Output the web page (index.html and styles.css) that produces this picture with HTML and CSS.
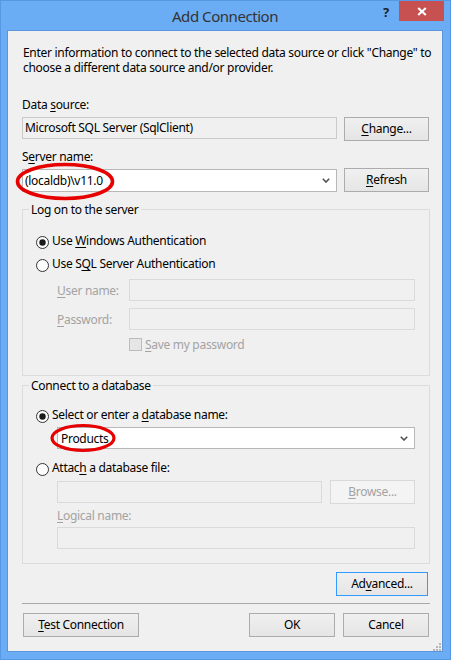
FILE: index.html
```html
<!DOCTYPE html>
<html lang="en">
<head>
<meta charset="utf-8">
<title>Add Connection</title>
<link rel="stylesheet" href="styles.css">
</head>
<body>
<div class="window">
  <header class="titlebar">
    <span class="spacer"></span>
    <h1 class="title">Add Connection</h1>
    <div class="caption-buttons">
      <span class="help">?</span>
      <span class="close"><svg width="10" height="9" viewBox="0 0 10 9"><path d="M1.2 1 L8.8 8 M8.8 1 L1.2 8" stroke="#fff" stroke-width="2.1" fill="none"/></svg></span>
    </div>
  </header>
  <main class="client">
    <p class="intro">Enter information to connect to the selected data source or click "Change" to<br>choose a different data source and/or provider.</p>

    <div class="label lbl-ds">Data <u>s</u>ource:</div>
    <div class="row row-ds">
      <div class="field readonly w-main">Microsoft SQL Server (SqlClient)</div>
      <button class="btn side"><u>C</u>hange...</button>
    </div>

    <div class="label lbl-sn">S<u>e</u>rver name:</div>
    <div class="row row-sn">
      <div class="combo w-main">
        <span class="combo-text">(localdb)\v11.0</span>
        <svg class="chev" width="8" height="5" viewBox="0 0 8 5"><path d="M0.8 0.8 L4 4 L7.2 0.8" stroke="#505050" stroke-width="1.6" fill="none"/></svg>
        <svg class="mark mark-server" width="100" height="39" viewBox="0 0 100 39"><ellipse cx="50" cy="19.5" rx="47.5" ry="17" stroke="#e60000" stroke-width="3.6" fill="none"/></svg>
      </div>
      <button class="btn side"><u>R</u>efresh</button>
    </div>

    <section class="group group-logon">
      <div class="group-title">Log on to the server</div>
      <div class="opt opt-first">
        <svg class="radio" width="13" height="13" viewBox="0 0 13 13"><circle cx="6.5" cy="6.5" r="6" fill="#fcfcfc" stroke="#333"/><circle cx="6.5" cy="6.5" r="3.2" fill="#1a1a1a"/></svg>
        <span>Use <u>W</u>indows Authentication</span>
      </div>
      <div class="opt opt-next">
        <svg class="radio" width="13" height="13" viewBox="0 0 13 13"><circle cx="6.5" cy="6.5" r="6" fill="#fcfcfc" stroke="#333"/></svg>
        <span>Use S<u>Q</u>L Server Authentication</span>
      </div>
      <div class="cred cred-user">
        <span class="cred-label disabled"><u>U</u>ser name:</span>
        <div class="field disabled-field w-cred"></div>
      </div>
      <div class="cred cred-pass">
        <span class="cred-label disabled"><u>P</u>assword:</span>
        <div class="field disabled-field w-cred"></div>
      </div>
      <div class="check-row">
        <span class="checkbox"></span>
        <span class="disabled"><u>S</u>ave my password</span>
      </div>
    </section>

    <section class="group group-db">
      <div class="group-title">Connect to a database</div>
      <div class="opt opt-first-db">
        <svg class="radio" width="13" height="13" viewBox="0 0 13 13"><circle cx="6.5" cy="6.5" r="6" fill="#fcfcfc" stroke="#333"/><circle cx="6.5" cy="6.5" r="3.2" fill="#1a1a1a"/></svg>
        <span>Select or enter a <u>d</u>atabase name:</span>
      </div>
      <div class="combo w-db db-combo">
        <span class="combo-text db-text">Products</span>
        <svg class="chev" width="8" height="5" viewBox="0 0 8 5"><path d="M0.8 0.8 L4 4 L7.2 0.8" stroke="#505050" stroke-width="1.6" fill="none"/></svg>
        <svg class="mark mark-db" width="66" height="30" viewBox="0 0 66 30"><ellipse cx="33" cy="15" rx="31" ry="12.5" stroke="#e60000" stroke-width="3.2" fill="none"/></svg>
      </div>
      <div class="opt opt-attach">
        <svg class="radio" width="13" height="13" viewBox="0 0 13 13"><circle cx="6.5" cy="6.5" r="6" fill="#fcfcfc" stroke="#333"/></svg>
        <span>Attac<u>h</u> a database file:</span>
      </div>
      <div class="file-row">
        <div class="field disabled-field w-file"></div>
        <button class="btn side btn-disabled"><u>B</u>rowse...</button>
      </div>
      <div class="label disabled lbl-logical"><u>L</u>ogical name:</div>
      <div class="field disabled-field w-db logical-field"></div>
    </section>

    <div class="adv-row">
      <button class="btn btn-adv focused">Ad<u>v</u>anced...</button>
    </div>

    <div class="separator"></div>

    <div class="footer">
      <button class="btn btn-test"><u>T</u>est Connection</button>
      <div class="footer-right">
        <button class="btn btn-dlg">OK</button>
        <button class="btn btn-dlg">Cancel</button>
      </div>
    </div>

    <svg class="grip" width="8" height="8" viewBox="0 0 8 8">
      <rect x="6" y="0" width="2" height="2" fill="#b5b5b5"/>
      <rect x="3" y="3" width="2" height="2" fill="#b5b5b5"/>
      <rect x="6" y="3" width="2" height="2" fill="#b5b5b5"/>
      <rect x="0" y="6" width="2" height="2" fill="#b5b5b5"/>
      <rect x="3" y="6" width="2" height="2" fill="#b5b5b5"/>
      <rect x="6" y="6" width="2" height="2" fill="#b5b5b5"/>
    </svg>
  </main>
</div>
</body>
</html>
```

FILE: styles.css
```css
* { box-sizing: border-box; }

html, body {
  margin: 0;
  padding: 0;
}

body {
  width: 451px;
  height: 660px;
  font-family: "Noto Sans", "DejaVu Sans", sans-serif;
  font-size: 12px;
  line-height: 15px;
  letter-spacing: -0.3px;
  color: #000;
  overflow: hidden;
}

u { text-decoration: underline; text-underline-offset: 2px; }

.window {
  width: 451px;
  height: 660px;
  background: #6badf4;
  border: 1px solid #5797e4;
  padding: 0 7px 7px 6px;
  display: flex;
  flex-direction: column;
}

.titlebar {
  height: 29px;
  flex: none;
  display: grid;
  grid-template-columns: 1fr auto 1fr;
  align-items: center;
}

.title {
  margin: 0;
  font-size: 15px;
  font-weight: normal;
  letter-spacing: -0.45px;
  color: #333;
  line-height: 20px;
  padding-top: 1px;
}

.caption-buttons {
  justify-self: end;
  align-self: start;
  display: flex;
  height: 20px;
  margin-right: -1px;
}

.help {
  font-weight: bold;
  font-size: 13px;
  line-height: 22px;
  color: #222;
  padding-right: 10px;
}

.close {
  width: 45px;
  height: 20px;
  background: #c75050;
  display: flex;
  align-items: center;
  justify-content: center;
}

.client {
  flex: 1;
  position: relative;
  background: #f0f0f0;
  border: 1px solid #5a94dc;
  padding: 14px 13px 0 14px;
}

.intro {
  margin: 0 0 0 1px;
  white-space: nowrap;
}

.label { white-space: nowrap; }
.lbl-ds { margin-top: 22px; }
.lbl-sn { margin-top: 8px; }

.row {
  display: flex;
  justify-content: space-between;
}
.row-ds { margin-top: 5px; align-items: flex-start; }
.row-sn { margin-top: 4px; align-items: center; }

.field {
  height: 22px;
  border: 1px solid #c9c9c9;
  padding: 0 2px;
  line-height: 20px;
  white-space: nowrap;
}
.readonly { background: #f0f0f0; border-color: #cacaca; }
.disabled-field { background: #f0f0f0; border-color: #dadada; }

.w-main { width: 315px; }

.combo {
  position: relative;
  height: 23px;
  background: #fff;
  border: 1px solid #b8b8b8;
  display: flex;
  align-items: center;
  justify-content: space-between;
  padding: 0 6px 0 2px;
}
.combo-text { white-space: nowrap; }

.chev { flex: none; margin-top: 1px; }

.mark {
  position: absolute;
  pointer-events: none;
}
.mark-server { left: -8px; top: -8px; }
.mark-db { left: -8px; top: -5px; }

.btn {
  font-family: inherit;
  font-size: 12px;
  letter-spacing: -0.3px;
  color: #000;
  height: 24px;
  border: 1px solid #acacac;
  background: linear-gradient(#f0f0f0, #e5e5e5);
  padding: 0;
  line-height: 22px;
  text-align: center;
  white-space: nowrap;
}
.btn.side { width: 85px; }
.btn-disabled {
  color: #a3a3a3;
  border-color: #d9d9d9;
  background: #f4f4f4;
}

.group {
  border: 1px solid #dcdcdc;
  margin-right: -1px;
  padding: 0 14px 0 13px;
}
.group-title {
  display: table;
  margin: -8px 0 0 -7px;
  padding: 0 2px;
  background: #f0f0f0;
  white-space: nowrap;
}
.group-logon { margin-top: 17px; padding-bottom: 23px; }
.group-db { margin-top: 9px; padding-bottom: 14px; }

.opt {
  display: flex;
  align-items: flex-start;
  height: 15px;
  white-space: nowrap;
}
.radio { flex: none; margin: 3px 3px 0 0; }
.opt-first { margin-top: 16px; }
.opt-next { margin-top: 8px; }
.opt-first-db { margin-top: 14px; }
.opt-attach { margin-top: 11px; }

.disabled { color: #a3a3a3; }

.cred {
  display: flex;
  align-items: center;
  margin-left: 21px;
}
.cred-user { margin-top: 8px; }
.cred-pass { margin-top: 7px; }
.cred-label { width: 72px; flex: none; white-space: nowrap; }
.w-cred { width: 286px; }

.check-row {
  display: flex;
  align-items: center;
  margin: 7px 0 0 93px;
  white-space: nowrap;
}
.checkbox {
  width: 13px;
  height: 13px;
  flex: none;
  border: 1px solid #bcbcbc;
  background: #e6e6e6;
  margin-right: 3px;
}

.w-db { width: 358px; }
.db-combo { margin: 5px 0 0 21px; height: 22px; }
.db-text { padding-left: 1px; }

.file-row {
  display: flex;
  align-items: center;
  gap: 8px;
  margin: 5px 0 0 21px;
}
.w-file { width: 265px; }

.lbl-logical { margin: 4px 0 0 21px; }
.logical-field { margin: 4px 0 0 21px; }

.adv-row {
  display: flex;
  justify-content: flex-end;
  margin-top: 8px;
}
.btn-adv { width: 92px; margin-right: 1px; }
.focused { border-color: #3399ff; }

.separator {
  height: 1px;
  background: #a9a9a9;
  margin: 7px -1px 0 0;
}

.footer {
  display: flex;
  justify-content: space-between;
  margin-top: 9px;
}
.btn-test { width: 116px; margin-left: 1px; }
.footer-right { display: flex; gap: 8px; }
.btn-dlg { width: 86px; }

.grip {
  position: absolute;
  right: 1px;
  bottom: 0;
}
```
